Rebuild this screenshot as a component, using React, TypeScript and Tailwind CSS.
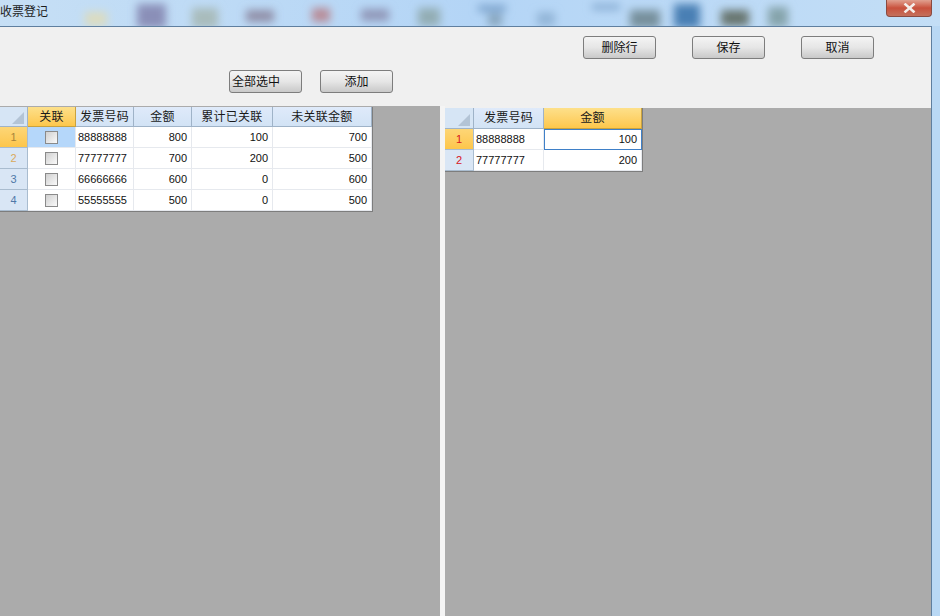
const leftRows = [
  { no: 1, code: '88888888', amount: 800, linked: 100, rest: 700 },
  { no: 2, code: '77777777', amount: 700, linked: 200, rest: 500 },
  { no: 3, code: '66666666', amount: 600, linked: 0, rest: 600 },
  { no: 4, code: '55555555', amount: 500, linked: 0, rest: 500 },
]

const rightRows = [
  { no: 1, code: '88888888', amount: 100 },
  { no: 2, code: '77777777', amount: 200 },
]

// blurred desktop icons showing through the title bar
const blobs = [
  { x: 85, y: 12, w: 22, h: 14, c: '#dcdcc0' },
  { x: 137, y: 4, w: 29, h: 24, c: '#8a8fb8' },
  { x: 192, y: 8, w: 26, h: 20, c: '#a9bcbc' },
  { x: 246, y: 10, w: 28, h: 12, c: '#908fa8' },
  { x: 312, y: 8, w: 18, h: 14, c: '#b88c98' },
  { x: 361, y: 9, w: 28, h: 12, c: '#9097b8' },
  { x: 418, y: 8, w: 22, h: 18, c: '#93adb4' },
  { x: 478, y: 5, w: 28, h: 7, c: '#7ba3cc' },
  { x: 488, y: 14, w: 14, h: 12, c: '#86a4bc' },
  { x: 537, y: 12, w: 18, h: 14, c: '#93b6d8' },
  { x: 592, y: 4, w: 28, h: 6, c: '#86abd2' },
  { x: 630, y: 10, w: 30, h: 18, c: '#77909c' },
  { x: 674, y: 4, w: 26, h: 24, c: '#4a7fb4' },
  { x: 721, y: 10, w: 28, h: 16, c: '#67766f' },
  { x: 768, y: 7, w: 20, h: 20, c: '#86a4ac' },
]

function Corner({ width }: { width: string }) {
  return (
    <div className={`flex shrink-0 items-end justify-end border-r border-b border-[#9fb3c8] bg-[#d6e5f5] pr-[3px] pb-[2px] ${width}`}>
      <div className="h-0 w-0 border-b-[12px] border-l-[12px] border-b-[#b3c4d6] border-l-transparent" />
    </div>
  )
}

function HeadCell({ label, width, active }: { label: string; width: string; active?: boolean }) {
  return (
    <div
      className={`flex items-center justify-center border-r border-b text-[12px] tracking-[0.25px] text-[#1a1a1a] ${width} ${
        active
          ? 'border-[#c9a23f] bg-gradient-to-b from-[#fde08a] to-[#fdc74a]'
          : 'border-[#9fb3c8] bg-gradient-to-b from-[#dfeafa] to-[#d2e3f5]'
      }`}
    >
      {label}
    </div>
  )
}

function RowHead({ no, width, active, red }: { no: number; width: string; active?: boolean; red?: boolean }) {
  const color = red ? 'text-[#d8141e]' : no === 2 ? 'text-[#d9a95a]' : active ? 'text-[#a8843a]' : 'text-[#4f78a8]'
  return (
    <div
      className={`flex shrink-0 items-center justify-center border-r border-b border-[#a9bccf] text-[11px] ${width} ${color} ${
        active ? 'bg-gradient-to-b from-[#fdd676] to-[#fdc64a]' : 'bg-[#d9e6f5]'
      }`}
    >
      {no}
    </div>
  )
}

function Cell({ text, width, right, focus }: { text?: string | number; width: string; right?: boolean; focus?: boolean }) {
  return (
    <div
      className={`flex items-center text-[11px] text-[#111] ${width} ${right ? 'justify-end pr-[4px]' : 'pl-[2px]'} ${
        focus ? 'border border-[#3f80c8]' : 'border-r border-b border-[#e6e9ee]'
      }`}
    >
      {text}
    </div>
  )
}

function CheckBox() {
  return <div className="h-[13px] w-[13px] border border-[#8a8a8a] bg-gradient-to-br from-[#d0d0d0] to-[#fafafa]" />
}

function LeftGrid() {
  return (
    <div className="w-[373px] border-r border-b border-[#7d7d7d] bg-white">
      <div className="flex h-[20px]">
        <Corner width="w-[28px]" />
        <HeadCell label="关联" width="w-[48px]" active />
        <HeadCell label="发票号码" width="w-[58px]" />
        <HeadCell label="金额" width="w-[58px]" />
        <HeadCell label="累计已关联" width="w-[81px]" />
        <HeadCell label="未关联金额" width="w-[99px]" />
      </div>
      {leftRows.map((row) => (
        <div key={row.no} className="flex h-[21px]">
          <RowHead no={row.no} width="w-[28px]" active={row.no === 1} />
          <div
            className={`flex w-[48px] items-center justify-center border-r border-b border-[#e6e9ee] ${
              row.no === 1 ? 'bg-[#b5d7fa]' : ''
            }`}
          >
            <CheckBox />
          </div>
          <Cell text={row.code} width="w-[58px]" />
          <Cell text={row.amount} width="w-[58px]" right />
          <Cell text={row.linked} width="w-[81px]" right />
          <Cell text={row.rest} width="w-[99px]" right />
        </div>
      ))}
    </div>
  )
}

function RightGrid() {
  return (
    <div className="w-[198px] border-r border-b border-[#7d7d7d] bg-white">
      <div className="flex h-[21px]">
        <Corner width="w-[29px]" />
        <HeadCell label="发票号码" width="w-[70px]" />
        <HeadCell label="金额" width="w-[98px]" active />
      </div>
      {rightRows.map((row) => (
        <div key={row.no} className="flex h-[21px]">
          <RowHead no={row.no} width="w-[29px]" active={row.no === 1} red />
          <Cell text={row.code} width="w-[70px]" />
          <Cell text={row.amount} width="w-[98px]" right focus={row.no === 1} />
        </div>
      ))}
    </div>
  )
}

function Btn({ label, left }: { label: string; left?: boolean }) {
  return (
    <button
      className={`flex h-[23px] w-[73px] items-center rounded-[3px] border border-[#7d7d7d] bg-gradient-to-b from-[#f4f4f4] via-[#e6e6e6] to-[#c9c9c9] text-[12px] text-[#111] ${
        left ? 'pl-[2px]' : 'justify-center'
      }`}
    >
      {label}
    </button>
  )
}

export default function App() {
  return (
    <div
      className="flex h-[616px] w-[940px] flex-col overflow-hidden bg-[#b9d8f4]"
      style={{ fontFamily: '"Liberation Sans", "Noto Sans CJK SC", sans-serif' }}
    >
      <div className="relative flex h-[26px] shrink-0 items-center overflow-hidden bg-gradient-to-r from-[#c6dff5] via-[#b4d5f6] to-[#c3def6]">
        <svg className="absolute inset-0" width="940" height="26">
          <defs>
            <filter id="soft" x="-5%" y="-40%" width="110%" height="180%">
              <feGaussianBlur stdDeviation="4" />
            </filter>
          </defs>
          <g filter="url(#soft)">
            {blobs.map((b) => (
              <rect key={b.x} x={b.x} y={b.y} width={b.w} height={b.h} fill={b.c} />
            ))}
          </g>
        </svg>
        <span className="relative -mt-[2px] text-[12px] text-[#1c1c1c]">收票登记</span>
        <div className="absolute top-0 right-[8px] flex h-[17px] w-[46px] items-center justify-center rounded-b-[4px] border border-t-0 border-[#8a4a40] bg-gradient-to-b from-[#e0a090] via-[#c8503c] to-[#c4705c]">
          <svg width="13" height="10" viewBox="0 0 13 10">
            <path d="M2.5 1.5 L10.5 8.5 M10.5 1.5 L2.5 8.5" stroke="#f4eeea" strokeWidth="2.6" strokeLinecap="square" />
          </svg>
        </div>
      </div>
      <div className="mr-[8px] flex min-h-0 flex-1 flex-col border-t border-r border-[#5f7f9f] bg-[#f0f0f0]">
        <div className="flex h-[79px] shrink-0 flex-col">
          <div className="flex justify-end gap-[36px] pt-[9px] pr-[57px]">
            <Btn label="删除行" />
            <Btn label="保存" />
            <Btn label="取消" />
          </div>
          <div className="flex gap-[18px] pt-[11px] pl-[229px]">
            <Btn label="全部选中" left />
            <Btn label="添加" />
          </div>
        </div>
        <div className="flex min-h-0 flex-1">
          <div className="w-[440px] bg-[#ababab] pt-px">
            <LeftGrid />
          </div>
          <div className="w-[5px] bg-[#f4f4f4]" />
          <div className="flex-1 border-t-2 border-[#f0f0f0] bg-[#ababab]">
            <RightGrid />
          </div>
        </div>
      </div>
    </div>
  )
}
